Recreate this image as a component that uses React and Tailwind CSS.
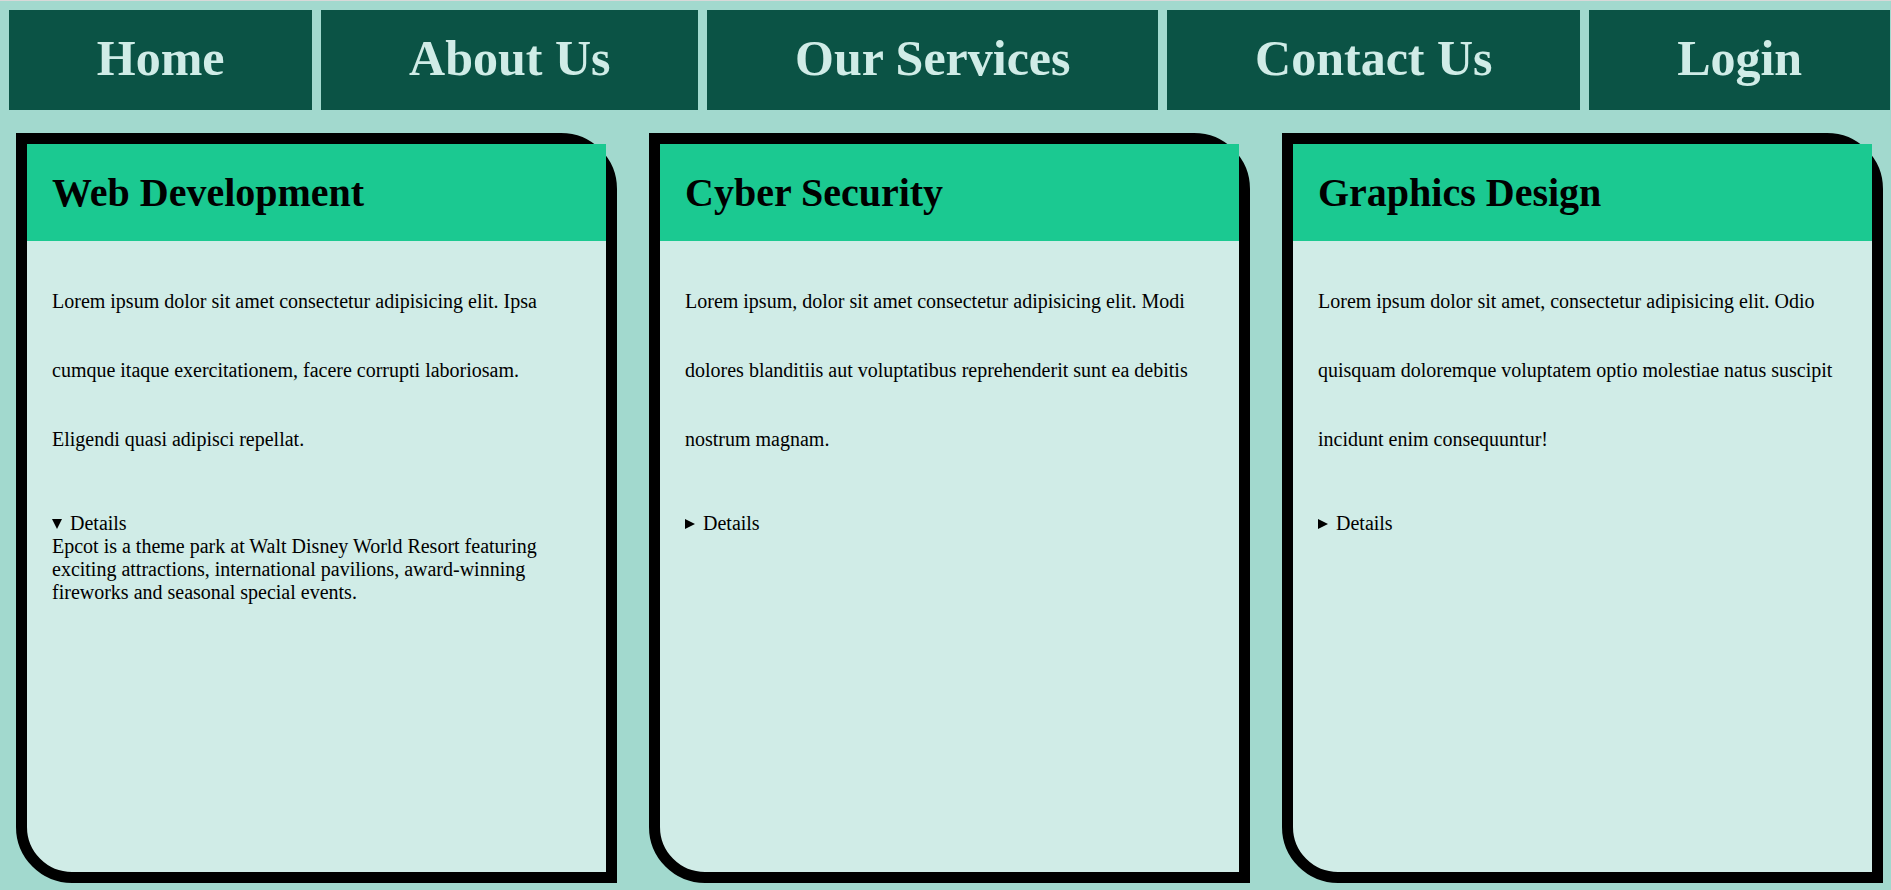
const links = ["Home", "About Us", "Our Services", "Contact Us", "Login"];

const services = [
  {
    title: "Web Development",
    text: "Lorem ipsum dolor sit amet consectetur adipisicing elit. Ipsa cumque itaque exercitationem, facere corrupti laboriosam. Eligendi quasi adipisci repellat.",
    open: true,
  },
  {
    title: "Cyber Security",
    text: "Lorem ipsum, dolor sit amet consectetur adipisicing elit. Modi dolores blanditiis aut voluptatibus reprehenderit sunt ea debitis nostrum magnam.",
    open: false,
  },
  {
    title: "Graphics Design",
    text: "Lorem ipsum dolor sit amet, consectetur adipisicing elit. Odio quisquam doloremque voluptatem optio molestiae natus suscipit incidunt enim consequuntur!",
    open: false,
  },
];

function NavBar() {
  return (
    <nav className="flex gap-[9px] pt-[9px] pr-px pl-[9px]">
      {links.map((label) => (
        <a
          key={label}
          href="#"
          className="flex h-[100px] flex-auto items-center justify-center bg-[#0b5345] pb-1 text-[50px] leading-none font-bold whitespace-nowrap text-[#d0ece7]"
        >
          {label}
        </a>
      ))}
    </nav>
  );
}

function ServiceCard({ title, text, open }) {
  return (
    <article className="rounded-tr-[56px] rounded-bl-[56px] border-[11px] border-black bg-[#d0ece7]">
      <h2 className="bg-[#1bc991] px-[25px] py-6 text-[40px] leading-[49px] font-bold">{title}</h2>
      <div className="px-[25px] pt-[26px] text-xl">
        <p className="leading-[69px]">{text}</p>
        <details open={open} className="group mt-[38px] leading-[23px]">
          <summary className="flex cursor-default list-none items-center gap-2">
            <svg
              viewBox="0 0 10 10"
              className="size-[10px] shrink-0 group-open:rotate-90"
              aria-hidden="true"
            >
              <path d="M0 0 L10 5 L0 10 Z" fill="currentColor" />
            </svg>
            Details
          </summary>
          <p>
            Epcot is a theme park at Walt Disney World Resort featuring exciting attractions,
            international pavilions, award-winning fireworks and seasonal special events.
          </p>
        </details>
      </div>
    </article>
  );
}

export default function App() {
  return (
    <div className="flex min-h-screen flex-col border-t border-[#d9d9d9] bg-[#a2d9ce] font-['Liberation_Serif','Times_New_Roman',serif] text-black">
      <NavBar />
      <main className="grid flex-1 grid-cols-3 gap-8 pt-[23px] pr-2 pb-[7px] pl-4">
        {services.map((service) => (
          <ServiceCard key={service.title} {...service} />
        ))}
      </main>
    </div>
  );
}
